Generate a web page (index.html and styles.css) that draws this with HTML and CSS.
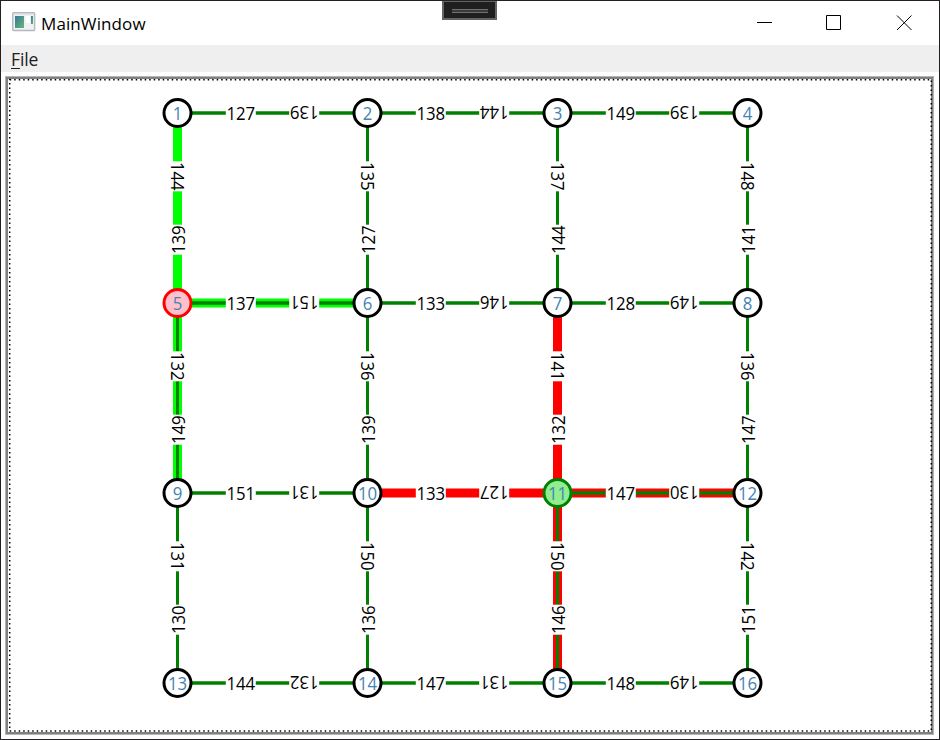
FILE: index.html
```html
<!DOCTYPE html>
<html lang="en">
<head>
<meta charset="utf-8">
<title>MainWindow</title>
<link rel="stylesheet" href="styles.css">
</head>
<body>
<div class="window">
  <div class="debug-bar"><span class="grip"></span></div>
  <header class="titlebar">
    <svg class="app-icon" width="24" height="20" viewBox="0 0 24 20">
      <defs><linearGradient id="g" x1="0" y1="0" x2="1" y2="1"><stop offset="0" stop-color="#3d7599"/><stop offset="1" stop-color="#62b878"/></linearGradient></defs>
      <rect x=".7" y=".7" width="22" height="18" rx="1" fill="#dfe2e6" stroke="#b4b9be" stroke-width="1.3"/>
      <rect x="2" y="3" width="19.5" height="14" fill="#f0f1f3"/>
      <rect x="3" y="4" width="9" height="12" fill="url(#g)"/>
      <rect x="14" y="4" width="4" height="7" fill="#fff"/>
      <rect x="19" y="4" width="2" height="8" fill="url(#g)"/>
    </svg>
    <h1 class="title">MainWindow</h1>
    <svg class="controls" width="156" height="16" viewBox="0 0 156 16">
      <path d="M0 7.5h15M69.500 .5h14v14h-14z M140 .5l14.500 14.500M154.500 .5l-14.500 14.500" fill="none" stroke="#000"/>
    </svg>
  </header>
  <nav class="menu"><span class="menu-item"><u>F</u>ile</span></nav>
  <main class="view">
    <svg id="graph" class="graph" width="929" height="659" viewBox="5 76 929 659"></svg>
  </main>
</div>
<script src="graph.js"></script>
</body>
</html>
```
FILE: styles.css
```css
* { box-sizing: border-box; }
body { margin: 0; font-family: "Open Sans", "Noto Sans", sans-serif; background: #fff; }
.window { position: relative; width: 940px; height: 740px; border: 1px solid #231f22; display: flex; flex-direction: column; overflow: hidden; background: #fff; }
.debug-bar { position: absolute; left: 441px; top: -1px; width: 55px; height: 20px; border: 2px solid #646464; background: #1f1f1f; display: flex; align-items: center; justify-content: center; }
.grip { width: 36px; height: 4px; margin-top: 2px; border-top: 1px solid #707070; border-bottom: 1px solid #707070; background: #3a3a3a; }
.titlebar { height: 44px; flex: none; display: flex; align-items: center; padding: 0 26px 0 11px; }
.app-icon { margin-right: 5px; margin-top: -3px; }
.title { margin: 0; font-size: 17px; font-weight: 400; line-height: 24px; letter-spacing: .1px; color: #000; flex: 1; margin-top: 1px; }
.controls { flex: none; }
.menu { height: 27px; flex: none; background: #efefef; padding-left: 10px; display: flex; align-items: center; }
.menu-item { font-size: 17.5px; line-height: 24px; color: #212121; letter-spacing: -.1px; padding-top: 1px; }
.menu-item u { text-decoration-thickness: 1px; text-underline-offset: 2px; }
.view { flex: 1; padding: 4px 5px 4px 4px; display: flex; }
.graph { display: block; width: 929px; height: 659px; flex: none; }
.edge { stroke: #008000; stroke-width: 3; }
.route { stroke-width: 9; }
.lime { stroke: #0f0; }
.red { stroke: #f00; }
.across .edge { stroke-width: 3.4; }
.label-bg { fill: #fff; }
.label { font-size: 17.5px; fill: #000; text-anchor: middle; }
.node { fill: #fff; stroke: #000; stroke-width: 3; }
.node-start { fill: #ffc0cb; stroke: #f00; }
.node-end { fill: #90ee90; stroke: #008000; }
.node-text { font-size: 17.5px; fill: #4682b4; text-anchor: middle; }
.frame { fill: none; stroke: #808080; stroke-width: 2; }
.frame-soft { fill: none; stroke: #b4b4b4; stroke-width: 1; }
.focus { fill: none; stroke: #000; stroke-width: 1.5; stroke-dasharray: 1.5 3; }
```
FILE: graph.js
```js
const svg = document.getElementById('graph');
function add(parent, tag, attrs, text) {
  const el = document.createElementNS('http://www.w3.org/2000/svg', tag);
  for (const k in attrs) el.setAttribute(k, attrs[k]);
  if (text !== undefined) el.textContent = text;
  parent.appendChild(el);
  return el;
}
add(svg, 'rect', { class: 'frame-soft', x: 5.5, y: 76.5, width: 928, height: 658 });
add(svg, 'rect', { class: 'frame', x: 7, y: 78, width: 925, height: 655 });
add(svg, 'rect', { class: 'focus', x: 9.7, y: 79.7, width: 921.6, height: 651.3 });

// Each edge carries the weight of both directions.
const across = [
  [[127, 139], [138, 144], [149, 139]],
  [[137, 151], [133, 146], [128, 149]],
  [[151, 131], [133, 127], [147, 130]],
  [[144, 132], [147, 131], [148, 149]]
];
const down = [
  [[144, 139], [135, 127], [137, 144], [148, 141]],
  [[132, 149], [136, 139], [141, 132], [136, 147]],
  [[131, 130], [150, 136], [150, 146], [142, 151]]
];
// Highlight colour, and whether the edge itself shows over it.
const routes = {
  '1-5': ['lime', false], '5-6': ['lime', true], '5-9': ['lime', true],
  '7-11': ['red', false], '10-11': ['red', false], '11-12': ['red', true], '11-15': ['red', true]
};
const X = n => 177.5 + ((n - 1) % 4) * 190;
const Y = n => 113 + Math.floor((n - 1) / 4) * 190;

function edge(a, b, weights) {
  const vertical = X(a) === X(b);
  const g = add(svg, 'g', {
    class: vertical ? 'down' : 'across',
    transform: `translate(${X(a)} ${Y(a)}) rotate(${vertical ? 90 : 0})`
  });
  const route = routes[`${a}-${b}`];
  if (route) add(g, 'line', { class: `route ${route[0]}`, x1: 0, y1: 0, x2: 190, y2: 0 });
  if (!route || route[1]) add(g, 'line', { class: 'edge', x1: 0, y1: 0, x2: 190, y2: 0 });
  weights.forEach((w, i) => {
    const t = add(g, 'g', { transform: `translate(${i ? 126.7 : 63.3} 0) rotate(${i * 180})` });
    add(t, 'rect', { class: 'label-bg', x: -15, y: -12, width: 30, height: 24 });
    add(t, 'text', { class: 'label', x: 0, y: 7, textLength: 28.8, lengthAdjust: 'spacingAndGlyphs' }, w);
  });
}
across.forEach((row, r) => row.forEach((w, c) => edge(r * 4 + c + 1, r * 4 + c + 2, w)));
down.forEach((row, r) => row.forEach((w, c) => edge(r * 4 + c + 1, r * 4 + c + 5, w)));
for (let n = 1; n <= 16; n++) {
  const kind = n === 5 ? ' node-start' : n === 11 ? ' node-end' : '';
  add(svg, 'circle', { class: 'node' + kind, cx: X(n), cy: Y(n), r: 13.5 });
  add(svg, 'text', {
    class: 'node-text', x: X(n), y: Y(n) + 7,
    textLength: String(n).length * 9.6, lengthAdjust: 'spacingAndGlyphs'
  }, n);
}
```
